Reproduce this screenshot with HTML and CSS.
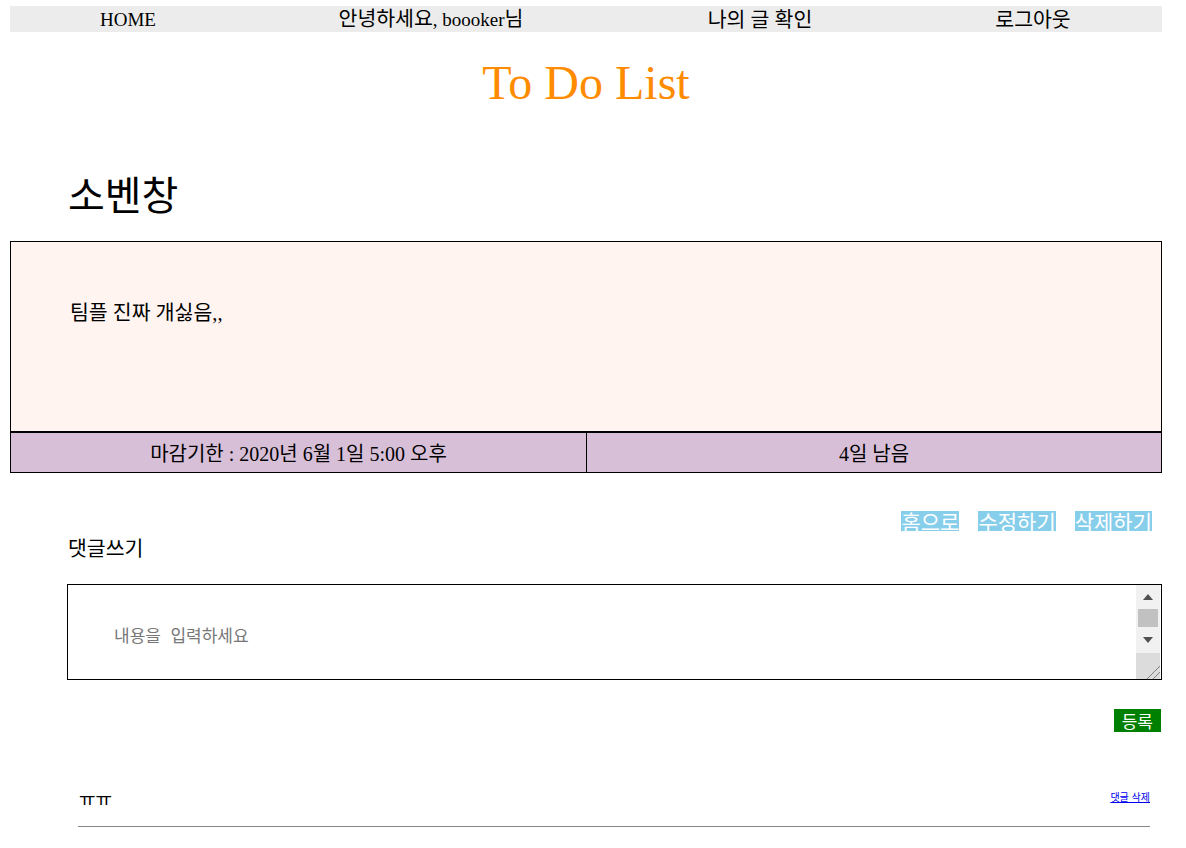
FILE: index.html
```html
<!DOCTYPE html>
<html lang="ko">
<head>
<meta charset="utf-8">
<title>To Do List</title>
<link rel="stylesheet" href="styles.css">
</head>
<body>
<div class="page">
  <nav class="nav">
    <a class="nav-item" href="#">HOME</a>
    <span class="nav-item"><span class="ko">안녕하세요</span>, boooker<span class="ko">님</span></span>
    <a class="nav-item ko-item" href="#">나의 글 확인</a>
    <a class="nav-item ko-item" href="#">로그아웃</a>
  </nav>
  <h1 class="title">To Do List</h1>
  <h2 class="heading">소벤창</h2>
  <div class="card">
    <div class="card-body">팀플 진짜 개싫음,,</div>
    <div class="card-foot">
      <div class="cell">마감기한 : 2020년 6월 1일 5:00 오후</div>
      <div class="cell">4일 남음</div>
    </div>
  </div>
  <div class="actions">
    <a class="btn" href="#">홈으로</a>
    <a class="btn" href="#">수정하기</a>
    <a class="btn" href="#">삭제하기</a>
  </div>
  <div class="comment-label">댓글쓰기</div>
  <div class="comment-box">
    <textarea class="comment-input" placeholder="내용을  입력하세요"></textarea>
    <div class="scrollbar" aria-hidden="true">
      <div class="sb-btn">
        <svg width="10" height="6" viewBox="0 0 10 6"><polygon points="5,0 10,6 0,6" fill="#505050"/></svg>
      </div>
      <div class="sb-thumb"></div>
      <div class="sb-btn sb-down">
        <svg width="10" height="6" viewBox="0 0 10 6"><polygon points="0,0 10,0 5,6" fill="#505050"/></svg>
      </div>
      <div class="sb-corner">
        <svg width="24" height="26" viewBox="0 0 24 26"><line x1="11" y1="26" x2="24" y2="13" stroke="#808080" stroke-width="1"/><line x1="17" y1="26" x2="24" y2="19" stroke="#808080" stroke-width="1"/></svg>
      </div>
    </div>
  </div>
  <div class="submit-row"><button class="submit">등록</button></div>
  <div class="comment">
    <span class="comment-text">ㅠㅠ</span>
    <a class="comment-del" href="#">댓글 삭제</a>
  </div>
</div>
</body>
</html>
```
FILE: styles.css
```css
html, body {
  margin: 0;
  padding: 0;
  background: #fff;
}
body {
  font-family: "Liberation Serif", "Noto Sans CJK KR", serif;
  color: #000;
}
.page {
  width: 1152px;
  margin-left: 10px;
  padding-top: 6px;
  display: flex;
  flex-direction: column;
}
.nav {
  display: grid;
  grid-template-columns: 236px 370px 288px 258px;
  background: #ececec;
  height: 26px;
  align-items: center;
}
.nav-item {
  text-align: center;
  font-size: 19px;
  line-height: 26px;
  color: #000;
  text-decoration: none;
}
.nav-item .ko {
  font-size: 20.5px;
}
.nav-item.ko-item {
  font-size: 20.5px;
}
.title {
  margin: 24px 0 0;
  text-align: center;
  font-weight: normal;
  font-size: 48px;
  line-height: 54px;
  color: #ff8c00;
}
.heading {
  margin: 58px 0 0 58px;
  font-weight: normal;
  font-size: 40px;
  line-height: 50px;
  font-family: "Noto Sans CJK KR", sans-serif;
}
.card {
  margin-top: 23px;
  border: 1px solid #000;
  display: flex;
  flex-direction: column;
}
.card-body {
  background: #fff4ef;
  height: 190px;
  box-sizing: border-box;
  padding: 58px 0 0 59px;
  font-size: 20.5px;
  line-height: 26px;
  border-bottom: 1px solid #000;
}
.card-foot {
  display: grid;
  grid-template-columns: 1fr 1fr;
  background: #d8bfd8;
  border-top: 1px solid #000;
}
.cell {
  height: 39px;
  display: flex;
  align-items: center;
  justify-content: center;
  font-size: 20px;
}
.cell:first-child {
  border-right: 1px solid #000;
  margin-right: -1px;
}
.cell:last-child {
  border-left: 1px solid #000;
}
.actions {
  margin-top: 38px;
  display: flex;
  justify-content: flex-end;
  gap: 19px;
  padding-right: 10px;
}
.btn {
  background: #87ceeb;
  color: #fff;
  font-family: "Noto Sans CJK KR", sans-serif;
  font-size: 21px;
  line-height: 21px;
  height: 21px;
  text-decoration: underline;
  text-underline-offset: 1px;
}
.comment-label {
  margin: 4px 0 0 58px;
  font-size: 20.5px;
  line-height: 26px;
}
.comment-box {
  margin: 22px 0 0 57px;
  width: 1095px;
  height: 96px;
  box-sizing: border-box;
  border: 1px solid #000;
  display: flex;
  background: #fff;
}
.comment-input {
  flex: 1;
  height: 94px;
  box-sizing: border-box;
  border: none;
  padding: 38px 46px 0;
  margin: 0;
  font-family: "Noto Sans CJK KR", sans-serif;
  font-size: 17px;
  line-height: 24px;
  resize: none;
  outline: none;
  background: transparent;
}
.comment-input::placeholder {
  color: #777;
}
.scrollbar {
  width: 24px;
  margin-right: 1px;
  display: flex;
  flex-direction: column;
  background: #f1f1f1;
}
.sb-btn {
  height: 24px;
  display: flex;
  align-items: center;
  justify-content: center;
}
.sb-btn.sb-down {
  height: 26px;
}
.sb-thumb {
  height: 18px;
  margin: 0 2px;
  background: #c1c1c1;
}
.sb-corner {
  flex: 1;
  background: #dcdcdc;
  display: flex;
  align-items: flex-end;
  justify-content: flex-end;
}
.sb-corner svg {
  display: block;
}
.submit-row {
  margin-top: 29px;
  display: flex;
  justify-content: flex-end;
  padding-right: 1px;
}
.submit {
  background: #008000;
  color: #fff;
  border: none;
  padding: 0 8px;
  height: 23px;
  font-family: "Noto Sans CJK KR", sans-serif;
  font-size: 17px;
  line-height: 23px;
}
.comment {
  margin: 52px 12px 0 68px;
  display: flex;
  justify-content: space-between;
  align-items: center;
  padding: 4px 0 18px 1px;
  border-bottom: 1px solid #888;
}
.comment-text {
  font-family: "Noto Sans CJK KR", sans-serif;
  font-size: 18px;
  line-height: 20px;
}
.comment-del {
  font-family: "Noto Sans CJK KR", sans-serif;
  font-size: 10px;
  color: #00e;
  margin-top: -4px;
}
```
